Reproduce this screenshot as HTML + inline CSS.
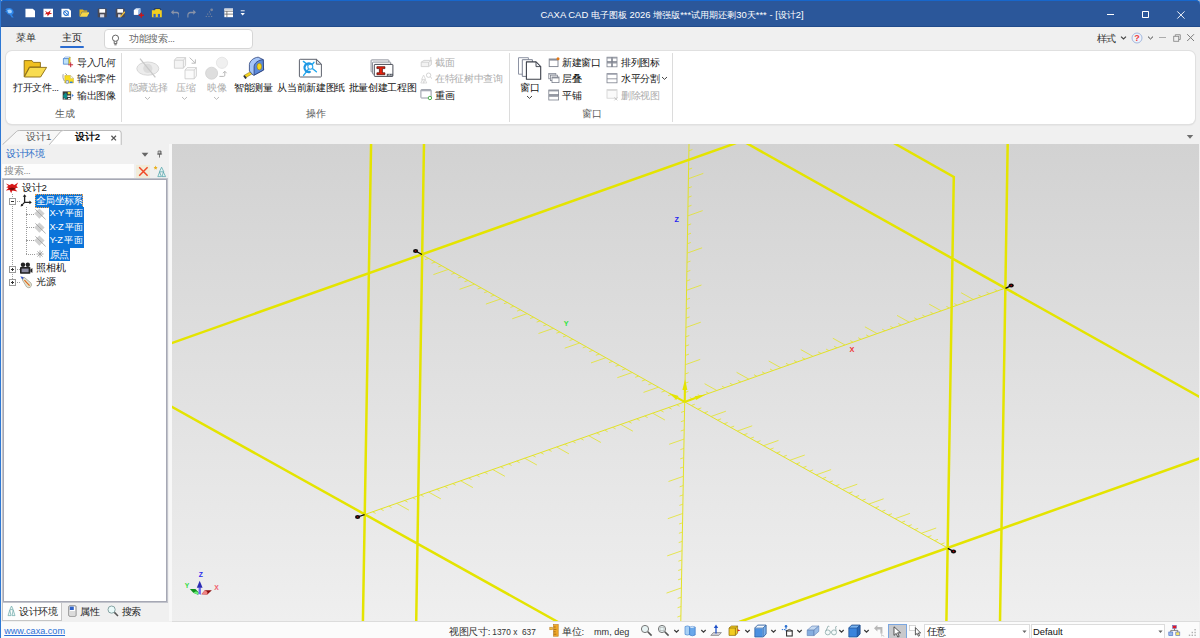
<!DOCTYPE html>
<html lang="zh"><head><meta charset="utf-8"><title>CAXA CAD</title>
<style>
*{box-sizing:border-box;margin:0;padding:0}
html,body{width:1200px;height:638px;overflow:hidden}
body{position:relative;background:#f0f0f0;font-family:"Liberation Sans",sans-serif;font-size:9.7px;color:#262626;line-height:1}
.abs,.t,svg.i{position:absolute}
.t{white-space:nowrap;line-height:12px;height:12px;letter-spacing:-.35px}
.l{letter-spacing:0}
.j{text-align-last:justify}
.c{text-align:center}
#title{left:0;top:0;width:1200px;height:26.7px;background:#2b579a;border-bottom:.8px solid #214b8c;box-shadow:inset 0 1px 0 #1767cc;border-radius:4.5px 4.5px 0 0}
#cor{left:0;top:0;width:1200px;height:6px;background:#9db6d2}
#lb{left:0;top:0;width:1px;height:638px;background:#2e78d4}
#tb{display:none}
#rb{left:1198.6px;top:27px;width:1.4px;height:594px;background:#f0f0f0}
#ribbon{left:6px;top:51px;width:1189px;height:73px;background:#fff;border-radius:6px;box-shadow:0 0 0 1px #e0e0e0,0 1px 2px rgba(0,0,0,.14)}
.sep{position:absolute;width:1px;background:#dcdcdc;top:53px;height:68.5px}
.dis{color:#adadad}
.g{color:#444}
#search{left:103.5px;top:29.2px;width:149.3px;height:19.4px;background:#fff;border:1px solid #d6d6d6;border-radius:4px}
#view{left:172px;top:144px;width:1027px;height:477px;background:linear-gradient(#d2d2d2,#efefef)}
#vb{left:172px;top:621px;width:1028px;height:1px;background:#dcdcdc}
#status{left:1px;top:622px;width:1198px;height:16px;background:#fbfbfb}
#pstrip{left:169px;top:144px;width:3px;height:477px;background:#f8f8f8}
#tree{left:2px;top:178px;width:166px;height:425.4px;background:#fff;border:1px solid #c2c4cc;box-shadow:inset 0 0 0 1px #a6a8b4}
.sel{position:absolute;background:#0a74da;color:#fff;height:13.5px;line-height:13px;white-space:nowrap;padding:0 1px;letter-spacing:-.35px;overflow:hidden;text-align-last:justify}
.dot{position:absolute;border-left:1px dotted #9c9c9c}
.doth{position:absolute;border-top:1px dotted #9c9c9c}
.pm{position:absolute;width:7px;height:7px;border:1px solid #9a9a9a;background:#fff}
.pm:before{content:"";position:absolute;left:1px;top:2px;width:3px;height:1px;background:#333}
.pm.p:after{content:"";position:absolute;left:2px;top:1px;width:1px;height:3px;background:#333}
.combo{position:absolute;top:624px;height:15px;background:#fff;border:1px solid #dcdcdc}
</style></head><body>
<div id="cor" class="abs"></div>
<div id="title" class="abs">
<div class="t j l" style="left:540.5px;width:263.2px;top:9px;color:#fff;font-size:9.45px">CAXA CAD 电子图板 2026 增强版***试用期还剩30天*** - [设计2]</div>
<!-- quick access icons -->
<svg class="i" style="left:3.6px;top:7.1px" width="11.7" height="11.7" viewBox="0 0 13 13"><path d="M1.5 2.5C4 .5 8 .8 9.8 3.2C11.6 5.4 10.6 8 8.6 8.6L10.8 11.6L8.6 11.8L6.6 8.6C4.6 8.6 3.2 7.4 2.8 5.8L1 5.4L2.8 4.2Z" fill="#2f86e8"/><path d="M3.6 3.4C5.4 2.2 7.8 2.6 8.6 4.2C9.2 5.6 8.4 6.8 7 7C5.6 7.2 4.4 6.4 4.2 5.2Z" fill="#9fd0ff"/></svg>
<svg class="i" style="left:24.6px;top:8.1px" width="10.8" height="9.9" viewBox="0 0 12 11"><path d="M.5 .8H8.6L11.4 3.2V10.2H.5Z" fill="#fff"/></svg>
<svg class="i" style="left:42.6px;top:8.1px" width="10.8" height="9.9" viewBox="0 0 12 11"><rect x=".5" y=".8" width="11" height="9.4" fill="#fff"/><path d="M2 3L5.4 5L8.6 2.6L7.6 5.4L10.4 6.4L7 7L5.2 9.2L4.6 6.8L1.8 7.2L3.8 5.4Z" fill="#d01818"/></svg>
<svg class="i" style="left:60.6px;top:8.1px" width="10.8" height="9.9" viewBox="0 0 12 11"><path d="M.5 .8H8.6L11.4 3.2V10.2H.5Z" fill="#fff"/><circle cx="5.6" cy="5.6" r="2.6" fill="none" stroke="#1f6fd0" stroke-width="1.2"/><path d="M3 3.2L8.6 8.4" stroke="#1f6fd0" stroke-width="1"/></svg>
<svg class="i" style="left:78.6px;top:8.1px" width="10.8" height="9.9" viewBox="0 0 12 11"><path d="M.6 1.6H4.4L5.4 2.8H9.2V4.2H3.2L.6 9.6Z" fill="#e8b81c"/><path d="M3.4 4.8H11.6L9 9.8H.8Z" fill="#f6d648"/></svg>
<svg class="i" style="left:96.6px;top:8.1px" width="10.8" height="9.9" viewBox="0 0 12 11"><rect x=".8" y=".6" width="10" height="9.8" rx="1" fill="#4a4a55"/><rect x="2.6" y="1.2" width="6.4" height="4" fill="#fff"/><rect x="3.4" y="7" width="4.6" height="3.4" fill="#d8d8e4"/></svg>
<svg class="i" style="left:114.6px;top:8.1px" width="10.8" height="9.9" viewBox="0 0 12 11"><rect x=".8" y=".6" width="10" height="9.8" rx="1" fill="#4a4a55"/><rect x="2.6" y="1.2" width="6.4" height="4" fill="#fff"/><rect x="3.4" y="7" width="3" height="3.4" fill="#d8d8e4"/><path d="M6 8.8L10.4 3.6L11.6 4.8L7.2 9.8L5.6 10.2Z" fill="#f2c23c"/></svg>
<svg class="i" style="left:132.7px;top:7.1px" width="11.7" height="11.7" viewBox="0 0 13 13"><path d="M1 3.4L3.4 1.4H8.2V6.4L5.8 8.6H1Z" fill="#dfe9f7"/><path d="M1 3.4H5.8V8.6H1Z" fill="#fff"/><path d="M5.8 3.4L8.2 1.4V6.4L5.8 8.6Z" fill="#8fb4e6"/><path d="M9.2 6.4V12M6.4 9.2H12" stroke="#d01414" stroke-width="1.5"/></svg>
<svg class="i" style="left:150.7px;top:8.1px" width="11.7" height="9.9" viewBox="0 0 13 11"><path d="M1 2.4H4.4L5.2 1H9.6L10.2 2.4H12V10.4H1Z" fill="#f2cf1f"/><rect x="2.8" y="6.6" width="2.4" height="3.8" fill="#2f62c8"/><rect x="7.6" y="6.6" width="2.4" height="3.8" fill="#2f62c8"/><path d="M3 2.2L4 .6H10.4L11 2.2" fill="none" stroke="#333" stroke-width=".7"/></svg>
<svg class="i" style="left:169.6px;top:9.0px" width="9.9" height="9.0" viewBox="0 0 11 10"><path d="M4 .8L1 3.6L4 6.4V4.6H7.2C8.6 4.6 9.4 5.6 9.4 6.8V9.4H10.6V6.6C10.6 4.6 9.2 3 7.2 3H4Z" fill="#8a94a8"/></svg>
<svg class="i" style="left:186.6px;top:9.0px" width="9.9" height="9.0" viewBox="0 0 11 10"><path d="M7 .8L10 3.6L7 6.4V4.6H3.8C2.4 4.6 1.6 5.6 1.6 6.8V9.4H.4V6.6C.4 4.6 1.8 3 3.8 3H7Z" fill="#8a94a8"/></svg>
<svg class="i" style="left:204.6px;top:8.1px" width="9.9" height="9.9" viewBox="0 0 11 11"><g fill="#7b879f"><circle cx="7.4" cy="2" r="1.5"/><rect x="4.4" y="3.8" width="1.2" height="1.2"/><rect x="2.4" y="6.2" width="1.2" height="1.2"/><rect x="5.4" y="6.2" width="1.2" height="1.2"/><rect x=".8" y="8.8" width="1.2" height="1.2"/><rect x="3.8" y="8.8" width="1.2" height="1.2"/><rect x="6.8" y="8.8" width="1.2" height="1.2"/></g></svg>
<svg class="i" style="left:223.6px;top:8.1px" width="9.9" height="9.9" viewBox="0 0 11 11"><rect x=".4" y=".6" width="10" height="9.6" fill="#fff"/><path d="M.4 3.6H10.4M.4 6.8H10.4M3.2 3.6V10.2" stroke="#555" stroke-width=".8"/><rect x=".4" y=".6" width="10" height="2" fill="#cfd4dc"/></svg>
<svg class="i" style="left:240.3px;top:9.9px" width="5.4" height="7.2" viewBox="0 0 6 8"><rect x=".8" y=".4" width="4.4" height="1" fill="#fff"/><path d="M.6 3.2H5.4L3 6Z" fill="#fff"/></svg>
<!-- window controls -->
<div class="abs" style="left:1107px;top:14px;width:7.2px;height:1px;background:#fff"></div>
<div class="abs" style="left:1142px;top:11px;width:7.4px;height:7.2px;border:1px solid #fff;border-radius:.8px"></div>
<svg class="i" style="left:1176px;top:9.5px" width="10" height="10" viewBox="0 0 10 10"><path d="M1.3 1.4L8.5 8.6M8.5 1.4L1.3 8.6" stroke="#f2f5fa" stroke-width="1"/></svg>
</div>
<!-- menu row -->
<div class="t j" style="left:16.0px;width:19.5px;top:32px;font-size:10.4px;color:#333">菜单</div>
<div class="t j" style="left:62.0px;width:19.5px;top:32px;font-size:10.4px;color:#111">主页</div>
<div class="abs" style="left:60px;top:46px;width:24px;height:2px;background:#2b6cd0;border-radius:1px"></div>
<div id="search" class="abs"></div>
<svg class="i" style="left:111.2px;top:33.6px" width="9" height="12" viewBox="0 0 9 12"><circle cx="4.5" cy="4.2" r="3.1" fill="none" stroke="#555" stroke-width=".9"/><path d="M3.2 7.2V9.6H5.8V7.2M3.4 10.8H5.6" fill="none" stroke="#555" stroke-width=".9"/></svg>
<div class="t j" style="left:129.0px;width:45.7px;top:33px;color:#6a6a6a;font-size:9.6px">功能搜索...</div>
<div class="t j" style="left:1096.6px;width:19.5px;top:32.6px;color:#333">样式</div>
<svg class="i" style="left:1120px;top:35px" width="7" height="6" viewBox="0 0 7 6"><path d="M1 1.6L3.5 4L6 1.6" fill="none" stroke="#444" stroke-width="1.2"/></svg>
<svg class="i" style="left:1131px;top:32px" width="12" height="12" viewBox="0 0 12 12"><circle cx="6" cy="6" r="5" fill="#edf2fa" stroke="#9cb2da" stroke-width=".9"/><text x="6" y="9.2" font-family="Liberation Sans, sans-serif" font-weight="bold" font-size="9" fill="#f03a3a" text-anchor="middle">?</text></svg>
<svg class="i" style="left:1147px;top:35px" width="7" height="6" viewBox="0 0 7 6"><path d="M1 1.6L3.5 4L6 1.6" fill="none" stroke="#444" stroke-width="1"/></svg>
<div class="abs" style="left:1159px;top:37.4px;width:6.6px;height:1px;background:#ababab"></div>
<svg class="i" style="left:1172.6px;top:33.8px" width="8" height="8" viewBox="0 0 9 9"><path d="M2.6 2.4V.8H8.2V6.2H6.6" fill="none" stroke="#8a8a8a" stroke-width="1"/><rect x=".8" y="2.6" width="5.6" height="5.6" fill="none" stroke="#8a8a8a" stroke-width="1"/></svg>
<svg class="i" style="left:1186px;top:33px" width="9" height="9" viewBox="0 0 9 9"><path d="M1.2 1.2L8 8M8 1.2L1.2 8" stroke="#7c7c7c" stroke-width="1"/></svg>
<div id="ribbon" class="abs"></div>
<div class="sep" style="left:121.4px"></div><div class="sep" style="left:508.9px"></div><div class="sep" style="left:672.2px"></div>
<!-- group 1 -->
<svg class="i" style="left:23px;top:59px" width="25" height="20" viewBox="0 0 25 20"><path d="M1.2 1.6H9L10.4 3.4H17.4V8H6.4L1.2 17.6Z" fill="#f0c020" stroke="#8a6a10" stroke-width=".9" stroke-linejoin="round"/><path d="M6.6 8.4H23.6L17.6 18H1.4Z" fill="#f8dc50" stroke="#8a6a10" stroke-width=".9" stroke-linejoin="round"/></svg>
<div class="t j" style="left:12.9px;width:45.8px;top:81.5px">打开文件...</div>
<svg class="i" style="left:62px;top:56px" width="13" height="12" viewBox="0 0 13 12"><path d="M1.4 2.6L3 1H8.2L6.8 2.6Z" fill="#eef6fc" stroke="#4a84d4" stroke-width=".5"/><path d="M1.4 2.6H6.8V8.2H1.4Z" fill="#bfe2f8" stroke="#3a78d0" stroke-width=".7"/><path d="M6.8 2.6L8.2 1V6.6L6.8 8.2Z" fill="#f0d020" stroke="#b89a10" stroke-width=".4"/><path d="M8.7 6.4V11.2M6.3 8.8H11.1" stroke="#c42434" stroke-width="1"/></svg>
<svg class="i" style="left:62px;top:72px" width="13" height="12" viewBox="0 0 13 12"><path d="M2.8 3.6H8.6L11.4 6.2V11H2.8Z" fill="#f8dc20" stroke="#c8a818" stroke-width=".5"/><path d="M8.6 3.6V6.2H11.4Z" fill="#fff" stroke="#b0b0b0" stroke-width=".4"/><path d="M1.2 2.2C.6 4.6 1 7 2.4 9M3.4 1.4L5 3" fill="none" stroke="#8a8a8a" stroke-width=".8"/><rect x="4" y="8.6" width="2.6" height="2.6" rx=".6" fill="#e8f0fa" stroke="#4a6ab0" stroke-width=".6"/><path d="M8 9.6H10.6V11H8Z" fill="#2a7ae0"/></svg>
<svg class="i" style="left:62px;top:89px" width="13" height="12" viewBox="0 0 13 12"><rect x=".7" y="2.4" width="8.4" height="8.2" fill="#3a3a3a"/><path d="M1.2 6.6L3.6 3.4L5 5.2V9.6L3.4 10L1.2 8Z" fill="#0c8c88"/><rect x="5.8" y="3" width="2.6" height="2.2" fill="#e8d830"/><path d="M5.4 6.4H8.4V8H5.4ZM1.6 9.4H3V10.2H1.6ZM6 9H8.4V10.2H6Z" fill="#f4f4f4"/><path d="M9.8 4.8L11.8 6.4L9.8 8Z" fill="#3a82e8"/></svg>
<div class="t j" style="left:77.0px;width:38.8px;top:56.5px">导入几何</div>
<div class="t j" style="left:77.0px;width:38.8px;top:72.5px">输出零件</div>
<div class="t j" style="left:77.0px;width:38.8px;top:89.5px">输出图像</div>
<div class="t j g" style="left:55.3px;width:19.5px;top:107.5px;color:#5c5c5c">生成</div>
<!-- group 2 -->
<svg class="i" style="left:135px;top:57px" width="26" height="22" viewBox="0 0 26 22"><ellipse cx="12.8" cy="11.6" rx="11" ry="6.6" fill="#ececec" stroke="#d4d4d4" stroke-width=".9"/><circle cx="12.8" cy="11.4" r="4.6" fill="#dcdcdc"/><path d="M5 1.6L20.4 20.4" stroke="#c8c8c8" stroke-width="1.3"/></svg>
<div class="t j dis" style="left:128.7px;width:38.8px;top:81.5px">隐藏选择</div>
<svg class="i" style="left:144px;top:96px" width="7" height="5" viewBox="0 0 7 5"><path d="M1 1L3.5 3.4L6 1" fill="none" stroke="#b4b4b4" stroke-width=".9"/></svg>
<svg class="i" style="left:173px;top:56px" width="25" height="24" viewBox="0 0 25 24"><g fill="#f4f4f4" stroke="#cfcfcf" stroke-width=".9" stroke-linejoin="round"><path d="M1.4 4.2L3.6 1.6H12.6V9.4L10.4 12.2H1.4Z"/><path d="M1.4 4.2H10.4V12.2M10.4 4.2L12.6 1.6" fill="none"/><path d="M12 14L14.2 11.6H23.4V20L21.2 22.8H12Z" fill="#fbfbfb"/><path d="M12 14H21.2V22.8M21.2 14L23.4 11.6" fill="none"/></g><path d="M16.6 1.6L22.2 7M22.4 3.4V7.2H18.6" fill="none" stroke="#bcbcbc" stroke-width="1"/></svg>
<div class="t j dis" style="left:175.7px;width:19.5px;top:81.5px">压缩</div>
<svg class="i" style="left:181px;top:96px" width="7" height="5" viewBox="0 0 7 5"><path d="M1 1L3.5 3.4L6 1" fill="none" stroke="#b4b4b4" stroke-width=".9"/></svg>
<svg class="i" style="left:204px;top:56px" width="25" height="24" viewBox="0 0 25 24"><circle cx="18" cy="6.8" r="5.6" fill="#f0f0f0" stroke="#e2e2e2" stroke-width=".8"/><circle cx="7.6" cy="17.2" r="6" fill="#dedede" stroke="#d0d0d0" stroke-width=".8"/><path d="M15.4 20.4H19.6Q20.8 20.4 20.8 19.2V15.6M19 17.2L20.8 15.2L22.6 17.2" fill="none" stroke="#b8b8b8" stroke-width="1"/></svg>
<div class="t j dis" style="left:207.3px;width:19.5px;top:81.5px">映像</div>
<svg class="i" style="left:212.5px;top:96px" width="7" height="5" viewBox="0 0 7 5"><path d="M1 1L3.5 3.4L6 1" fill="none" stroke="#b4b4b4" stroke-width=".9"/></svg>
<svg class="i" style="left:236px;top:52px" width="36" height="30" viewBox="0 0 36 30"><path d="M8 23.4L15 19.4L16.6 21.6L9.6 25.8Z" fill="#f6d41c" stroke="#7a6410" stroke-width=".5"/><path d="M7.2 24L9.2 26.9L10.8 26L8.8 23.2Z" fill="#2a3040"/><path d="M13.4 12.4C13.6 9 18 5.4 22.2 5.2L27.2 7.6L27.6 18L18 23.2L17.2 23.2L13.4 19Z" fill="#a6c6f8" stroke="#2a3f78" stroke-width=".8" stroke-linejoin="round"/><path d="M18.1 14.4C18.4 10.8 22.6 8 27.2 7.6L27.6 18L18.1 23.1Z" fill="#5c8ada" stroke="#2a3f78" stroke-width=".8" stroke-linejoin="round"/><ellipse cx="23.3" cy="14.6" rx="2.3" ry="3.3" fill="#f8d81c" stroke="#8a7010" stroke-width=".5"/></svg>
<div class="t j" style="left:234.0px;width:38.8px;top:81.5px;color:#111">智能测量</div>
<svg class="i" style="left:294px;top:54px" width="36" height="30" viewBox="0 0 36 30"><path d="M6.2 5.3H22.4L27.4 10.2V22.2Q27.4 23 26.6 23H6.2Q5.4 23 5.4 22.2V6.1Q5.4 5.3 6.2 5.3Z" fill="#fff" stroke="#555a66" stroke-width=".95" stroke-linejoin="round"/><path d="M22.4 5.3V10.2H27.4Z" fill="#e4e6ea" stroke="#555a66" stroke-width=".9" stroke-linejoin="round"/><path d="M9.4 7.4L22.4 17.8M9.6 21.4L20 8.2" stroke="#22a8ee" stroke-width="1.4" stroke-linecap="round"/><path d="M17.2 10.2A4.3 4.3 0 1 0 15.8 17.9" fill="none" stroke="#1e96e2" stroke-width="2.2" stroke-linecap="round"/><circle cx="16.3" cy="12.8" r="2.5" fill="#fff" stroke="#2aa4ec" stroke-width="1.1"/></svg>
<div class="t j" style="left:277.2px;width:67.8px;top:81.5px;color:#111">从当前新建图纸</div>
<svg class="i" style="left:370px;top:58px" width="25" height="21" viewBox="0 0 25 21"><rect x="1.1" y="1.9" width="17.8" height="12" rx=".6" fill="#fff" stroke="#80848e" stroke-width=".9"/><rect x="2.5" y="4.1" width="18.2" height="12" rx=".6" fill="#fff" stroke="#80848e" stroke-width=".9"/><rect x="4.3" y="6.4" width="18.6" height="12" rx=".6" fill="#fff" stroke="#4a4e58" stroke-width="1"/><path d="M6.9 8.7H14.9V10.6H12.4V14.8H14.9V16.7H6.9V14.8H9.4V10.6H6.9Z" fill="#e8200c" stroke="#4a0a04" stroke-width=".7" stroke-linejoin="round"/><path d="M16.8 18.4V15.8H22.9V18.4Z" fill="#555a64"/><path d="M17.6 17.6L19.2 16.2L20.4 17.2L21.4 16.4L22.4 17.6Z" fill="#e8e8e8"/></svg>
<div class="t j" style="left:348.5px;width:67.8px;top:81.5px;color:#111">批量创建工程图</div>
<svg class="i" style="left:420px;top:56px" width="13" height="12" viewBox="0 0 13 12"><path d="M1.2 6.2L4 4.4H11.4V8.6L8.6 10.6H1.2ZM8.6 6.2V10.6M1.2 6.2H8.6L11.4 4.4M10.8 1V4.4" fill="#f2f2f2" stroke="#cfcfcf" stroke-width=".9" stroke-linejoin="round"/></svg>
<div class="t j dis" style="left:435.0px;width:19.5px;top:56.5px">截面</div>
<svg class="i" style="left:420px;top:72px" width="13" height="12" viewBox="0 0 13 12"><circle cx="8.6" cy="3.2" r="2.2" fill="none" stroke="#cfcfcf" stroke-width=".9"/><path d="M10.2 4.8L12 6.6" stroke="#cfcfcf" stroke-width="1"/><path d="M3.6 3L1.6 7.4H5.6ZM2.4 7.4L.8 11H4ZM5 7.4L3.6 11H6.8Z" fill="none" stroke="#d4d4d4" stroke-width=".8"/></svg>
<div class="t j dis" style="left:435.0px;width:67.8px;top:72.5px">在特征树中查询</div>
<svg class="i" style="left:420px;top:88px" width="13" height="13" viewBox="0 0 13 13"><rect x=".9" y="1.6" width="10.2" height="8.4" rx=".6" fill="#fff" stroke="#8a8e9a" stroke-width=".9"/><rect x=".9" y="1.6" width="10.2" height="1.7" fill="#a8acb6"/><circle cx="9.9" cy="10" r="1.7" fill="#fff" stroke="#4ab04a" stroke-width="1"/></svg>
<div class="t j" style="left:435.0px;width:19.5px;top:89.5px;color:#111">重画</div>
<div class="t j g" style="left:306.1px;width:19.5px;top:107.5px;color:#5c5c5c">操作</div>
<!-- group 3 -->
<svg class="i" style="left:517px;top:56px" width="26" height="25" viewBox="0 0 26 25"><g fill="#fff" stroke-linejoin="round"><path d="M1.5 1.7H11.4V18.2H1.5Z" stroke="#8e94a4" stroke-width="1"/><path d="M5.3 3.7H15.4V20.4H5.3Z" stroke="#7a8090" stroke-width="1"/><path d="M9.4 5.9H19L23.7 10.6V23.2H9.4Z" stroke="#3c404a" stroke-width="1.1"/><path d="M19 5.9V10.6H23.7Z" fill="#eceef2" stroke="#3c404a" stroke-width=".9"/></g></svg>
<div class="t j" style="left:520.0px;width:19.5px;top:81.5px;color:#111">窗口</div>
<svg class="i" style="left:525.5px;top:95px" width="7" height="5" viewBox="0 0 7 5"><path d="M1 1L3.5 3.4L6 1" fill="none" stroke="#444" stroke-width="1"/></svg>
<svg class="i" style="left:548px;top:57px" width="12" height="11" viewBox="0 0 12 11"><rect x="1.2" y="2" width="8.8" height="7.6" fill="#fff" stroke="#7d828e" stroke-width=".9"/><rect x="1.2" y="2" width="8.8" height="1.6" fill="#8a8e98"/><circle cx="10" cy="1.8" r="1.5" fill="#e07818"/></svg>
<svg class="i" style="left:548px;top:72px" width="12" height="12" viewBox="0 0 12 12"><g fill="#fff" stroke="#7d828e" stroke-width=".8"><rect x=".8" y="1.4" width="7" height="5.4"/><rect x="2.4" y="3.2" width="7" height="5.4"/><rect x="4" y="5" width="7" height="5.6"/></g><rect x="4" y="5" width="7" height="1.4" fill="#8a8e98"/><rect x=".8" y="1.4" width="7" height="1.2" fill="#a0a4ae"/></svg>
<svg class="i" style="left:548px;top:89px" width="12" height="12" viewBox="0 0 12 12"><g fill="#fff" stroke="#7d828e" stroke-width=".8"><rect x=".8" y="1" width="9.8" height="4.6"/><rect x=".8" y="6.4" width="9.8" height="4.6"/></g><rect x=".8" y="1" width="9.8" height="1.4" fill="#9498a2"/><rect x=".8" y="6.4" width="9.8" height="1.4" fill="#9498a2"/></svg>
<div class="t j" style="left:562.0px;width:38.8px;top:56.5px;color:#111">新建窗口</div>
<div class="t j" style="left:562.0px;width:19.5px;top:72.5px;color:#111">层叠</div>
<div class="t j" style="left:562.0px;width:19.5px;top:89.5px;color:#111">平铺</div>
<svg class="i" style="left:606px;top:56px" width="12" height="12" viewBox="0 0 12 12"><g fill="#fff" stroke="#7d828e" stroke-width=".8"><rect x="1" y="1.2" width="4.6" height="4.4"/><rect x="6.4" y="1.2" width="4.6" height="4.4"/><rect x="1" y="6.4" width="4.6" height="4.4"/><rect x="6.4" y="6.4" width="4.6" height="4.4"/></g><path d="M1 1.8H5.6M6.4 1.8H11M1 7H5.6M6.4 7H11" stroke="#9498a2" stroke-width="1.2"/></svg>
<svg class="i" style="left:606px;top:72px" width="12" height="12" viewBox="0 0 12 12"><rect x="1" y="1.6" width="10" height="9.2" fill="#fff" stroke="#7d828e" stroke-width=".8"/><path d="M1 6.8H11" stroke="#7d828e" stroke-width=".8"/><rect x="1" y="1.6" width="10" height="1.2" fill="#a0a4ae"/></svg>
<svg class="i" style="left:606px;top:88px" width="13" height="13" viewBox="0 0 13 13"><rect x="1" y="1.6" width="10" height="8.6" fill="#fafafa" stroke="#d0d0d0" stroke-width=".8"/><rect x="1" y="1.6" width="10" height="1.4" fill="#dcdcdc"/><path d="M8.4 9.4L11.4 12.4M11.4 9.4L8.4 12.4" stroke="#c4c4c4" stroke-width=".9"/></svg>
<div class="t j" style="left:621.0px;width:38.8px;top:56.5px;color:#111">排列图标</div>
<div class="t j" style="left:621.0px;width:38.8px;top:72.5px;color:#111">水平分割</div>
<svg class="i" style="left:661px;top:76px" width="7" height="5" viewBox="0 0 7 5"><path d="M1 1L3.5 3.4L6 1" fill="none" stroke="#444" stroke-width="1"/></svg>
<div class="t j dis" style="left:621.0px;width:38.8px;top:89.5px">删除视图</div>
<div class="t j g" style="left:581.7px;width:19.5px;top:107.5px;color:#5c5c5c">窗口</div>
<div id="view" class="abs"></div>
<svg id="vsvg" class="abs" style="left:172px;top:144px" width="1027" height="477" viewBox="172 144 1027 477">
<path d="M689.0 144L684.7 401.9L680.8 621M684.7 401.9L1005.4 288.1M684.7 401.9L422.0 254.7M684.7 401.9L364.7 514.6M684.7 401.9L947.6 547.9" stroke="#e2e21e" stroke-width="0.95" fill="none"/>
<path d="M692.7 399.1l-2.9 -1.6M700.7 396.2l-2.9 -1.6M708.8 393.4l-2.9 -1.6M716.8 390.5l-12.2 -6.8M724.8 387.7l-2.9 -1.6M732.8 384.8l-2.9 -1.6M740.8 382.0l-2.9 -1.6M748.8 379.1l-12.2 -6.8M756.9 376.3l-2.9 -1.6M764.9 373.4l-2.9 -1.6M772.9 370.6l-2.9 -1.6M780.9 367.8l-12.2 -6.8M788.9 364.9l-2.9 -1.6M796.9 362.1l-2.9 -1.6M805.0 359.2l-2.9 -1.6M813.0 356.4l-12.2 -6.8M821.0 353.5l-2.9 -1.6M829.0 350.7l-2.9 -1.6M837.0 347.8l-2.9 -1.6M845.0 345.0l-12.2 -6.8M853.1 342.2l-2.9 -1.6M861.1 339.3l-2.9 -1.6M869.1 336.5l-2.9 -1.6M877.1 333.6l-12.2 -6.8M885.1 330.8l-2.9 -1.6M893.2 327.9l-2.9 -1.6M901.2 325.1l-2.9 -1.6M909.2 322.2l-12.2 -6.8M917.2 319.4l-2.9 -1.6M925.2 316.6l-2.9 -1.6M933.2 313.7l-2.9 -1.6M941.3 310.9l-12.2 -6.8M949.3 308.0l-2.9 -1.6M957.3 305.2l-2.9 -1.6M965.3 302.3l-2.9 -1.6M973.3 299.5l-12.2 -6.8M981.3 296.6l-2.9 -1.6M989.4 293.8l-2.9 -1.6M997.4 290.9l-2.9 -1.6M678.1 398.2l-3.5 1.2M671.6 394.5l-3.5 1.2M665.0 390.9l-3.5 1.2M658.4 387.2l-14.9 5.2M651.9 383.5l-3.5 1.2M645.3 379.8l-3.5 1.2M638.7 376.1l-3.5 1.2M632.2 372.5l-14.9 5.2M625.6 368.8l-3.5 1.2M619.0 365.1l-3.5 1.2M612.5 361.4l-3.5 1.2M605.9 357.7l-14.9 5.2M599.3 354.1l-3.5 1.2M592.8 350.4l-3.5 1.2M586.2 346.7l-3.5 1.2M579.6 343.0l-14.9 5.2M573.1 339.3l-3.5 1.2M566.5 335.7l-3.5 1.2M559.9 332.0l-3.5 1.2M553.4 328.3l-14.9 5.2M546.8 324.6l-3.5 1.2M540.2 320.9l-3.5 1.2M533.6 317.3l-3.5 1.2M527.1 313.6l-14.9 5.2M520.5 309.9l-3.5 1.2M513.9 306.2l-3.5 1.2M507.4 302.5l-3.5 1.2M500.8 298.9l-14.9 5.2M494.2 295.2l-3.5 1.2M487.7 291.5l-3.5 1.2M481.1 287.8l-3.5 1.2M474.5 284.1l-14.9 5.2M468.0 280.5l-3.5 1.2M461.4 276.8l-3.5 1.2M454.8 273.1l-3.5 1.2M448.3 269.4l-14.9 5.2M441.7 265.7l-3.5 1.2M435.1 262.1l-3.5 1.2M428.6 258.4l-3.5 1.2M676.7 404.7l2.9 1.6M668.7 407.5l2.9 1.6M660.7 410.4l2.9 1.6M652.7 413.2l12.2 6.8M644.7 416.0l2.9 1.6M636.7 418.8l2.9 1.6M628.7 421.6l2.9 1.6M620.7 424.4l12.2 6.8M612.7 427.3l2.9 1.6M604.7 430.1l2.9 1.6M596.7 432.9l2.9 1.6M588.7 435.7l12.2 6.8M580.7 438.5l2.9 1.6M572.7 441.3l2.9 1.6M564.7 444.2l2.9 1.6M556.7 447.0l12.2 6.8M548.7 449.8l2.9 1.6M540.7 452.6l2.9 1.6M532.7 455.4l2.9 1.6M524.7 458.2l12.2 6.8M516.7 461.1l2.9 1.6M508.7 463.9l2.9 1.6M500.7 466.7l2.9 1.6M492.7 469.5l12.2 6.8M484.7 472.3l2.9 1.6M476.7 475.2l2.9 1.6M468.7 478.0l2.9 1.6M460.7 480.8l12.2 6.8M452.7 483.6l2.9 1.6M444.7 486.4l2.9 1.6M436.7 489.2l2.9 1.6M428.7 492.1l12.2 6.8M420.7 494.9l2.9 1.6M412.7 497.7l2.9 1.6M404.7 500.5l2.9 1.6M396.7 503.3l12.2 6.8M388.7 506.1l2.9 1.6M380.7 509.0l2.9 1.6M372.7 511.8l2.9 1.6M691.3 405.5l3.5 -1.3M697.8 409.2l3.5 -1.3M704.4 412.8l3.5 -1.3M711.0 416.5l14.9 -5.3M717.6 420.1l3.5 -1.3M724.1 423.8l3.5 -1.3M730.7 427.4l3.5 -1.3M737.3 431.1l14.9 -5.3M743.9 434.8l3.5 -1.3M750.4 438.4l3.5 -1.3M757.0 442.0l3.5 -1.3M763.6 445.7l14.9 -5.3M770.1 449.3l3.5 -1.3M776.7 453.0l3.5 -1.3M783.3 456.6l3.5 -1.3M789.9 460.3l14.9 -5.3M796.4 463.9l3.5 -1.3M803.0 467.6l3.5 -1.3M809.6 471.2l3.5 -1.3M816.2 474.9l14.9 -5.3M822.7 478.5l3.5 -1.3M829.3 482.2l3.5 -1.3M835.9 485.8l3.5 -1.3M842.4 489.5l14.9 -5.3M849.0 493.1l3.5 -1.3M855.6 496.8l3.5 -1.3M862.2 500.4l3.5 -1.3M868.7 504.1l14.9 -5.3M875.3 507.8l3.5 -1.3M881.9 511.4l3.5 -1.3M888.4 515.0l3.5 -1.3M895.0 518.7l14.9 -5.3M901.6 522.4l3.5 -1.3M908.2 526.0l3.5 -1.3M914.7 529.6l3.5 -1.3M921.3 533.3l14.9 -5.3M927.9 536.9l3.5 -1.3M934.5 540.6l3.5 -1.3M941.0 544.2l3.5 -1.3M684.9 392.6l3.5 -1.3M685.0 383.3l3.5 -1.3M685.2 374.0l3.5 -1.3M685.3 364.7l14.9 -5.3M685.5 355.4l3.5 -1.3M685.6 346.1l3.5 -1.3M685.8 336.8l3.5 -1.3M685.9 327.5l14.9 -5.3M686.1 318.2l3.5 -1.3M686.2 308.9l3.5 -1.3M686.4 299.6l3.5 -1.3M686.6 290.3l14.9 -5.3M686.7 281.0l3.5 -1.3M686.9 271.7l3.5 -1.3M687.0 262.4l3.5 -1.3M687.2 253.1l14.9 -5.3M687.3 243.8l3.5 -1.3M687.5 234.5l3.5 -1.3M687.6 225.2l3.5 -1.3M687.8 215.9l14.9 -5.3M688.0 206.6l3.5 -1.3M688.1 197.3l3.5 -1.3M688.3 188.0l3.5 -1.3M688.4 178.7l14.9 -5.3M688.6 169.4l3.5 -1.3M688.7 160.1l3.5 -1.3M688.9 150.8l3.5 -1.3M689.0 141.5l14.9 -5.3M684.5 411.2l-3.5 1.2M684.4 420.5l-3.5 1.2M684.2 429.8l-3.5 1.2M684.0 439.1l-14.9 5.2M683.9 448.4l-3.5 1.2M683.7 457.7l-3.5 1.2M683.5 467.0l-3.5 1.2M683.4 476.3l-14.9 5.2M683.2 485.6l-3.5 1.2M683.1 494.9l-3.5 1.2M682.9 504.2l-3.5 1.2M682.7 513.5l-14.9 5.2M682.6 522.8l-3.5 1.2M682.4 532.1l-3.5 1.2M682.2 541.4l-3.5 1.2M682.1 550.7l-14.9 5.2M681.9 560.0l-3.5 1.2M681.7 569.3l-3.5 1.2M681.6 578.6l-3.5 1.2M681.4 587.9l-14.9 5.2M681.2 597.2l-3.5 1.2M681.1 606.5l-3.5 1.2M680.9 615.8l-3.5 1.2" stroke="#e3e32a" stroke-width="0.8" fill="none"/>
<path d="M170 343.7L736 143.1M746.2 143L1200 397.2M893.7 143L953.8 176.9L946.4 622M371.1 143L362.9 622M424.0 143L416.2 622M1007.7 143L1000 622M170 405.8L558 622M739.2 622L1200 458.2" stroke="#e4e400" stroke-width="2.5" fill="none" stroke-linejoin="miter"/>
<path d="M684.7 401.9L684.9 390.1" stroke="#e4e400" stroke-width="2.1"/><path d="M685.1 379.3L687.4 390.1L682.4 390.1Z" fill="#e4e400"/>
<path d="M684.7 401.9L695.3 398.1" stroke="#e4e400" stroke-width="2.1"/><path d="M706.2 394.3L696.0 399.9L694.7 396.3Z" fill="#e4e400"/>
<path d="M684.7 401.9L677.5 397.8" stroke="#e4e400" stroke-width="2.1"/><path d="M668.3 392.7L678.5 395.9L676.4 399.8Z" fill="#e4e400"/>
<path d="M422 254.5L415.6 251" stroke="#0a0a0a" stroke-width="1.3"/><ellipse cx="415.6" cy="251" rx="2.6" ry="2" fill="#0a0a0a"/><circle cx="415.6" cy="251" r="0.8" fill="#b00000"/>
<path d="M364.6 514.7L357.6 517" stroke="#0a0a0a" stroke-width="1.3"/><ellipse cx="357.6" cy="517" rx="2.6" ry="2" fill="#0a0a0a"/><circle cx="357.6" cy="517" r="0.8" fill="#b00000"/>
<path d="M1005.5 288.3L1011.2 285.6" stroke="#0a0a0a" stroke-width="1.3"/><ellipse cx="1011.2" cy="285.6" rx="2.6" ry="2" fill="#0a0a0a"/><circle cx="1011.2" cy="285.6" r="0.8" fill="#b00000"/>
<path d="M947.8 548.4L953.5 551.4" stroke="#0a0a0a" stroke-width="1.3"/><ellipse cx="953.5" cy="551.4" rx="2.6" ry="2" fill="#0a0a0a"/><circle cx="953.5" cy="551.4" r="0.8" fill="#b00000"/>
<g font-family="Liberation Sans, sans-serif" font-size="7.3" font-weight="bold" text-anchor="middle"><text x="676.8" y="222.3" fill="#2424f0">Z</text><text x="566.1" y="326.1" fill="#30e440">Y</text><text x="852" y="351.9" fill="#f03434">X</text></g>
<g font-family="Liberation Sans, sans-serif" font-size="6.8" font-weight="bold" text-anchor="middle"><text x="200.9" y="576.9" fill="#2a2aee">Z</text><text x="187.1" y="587.9" fill="#34dc44">Y</text><text x="216.4" y="590" fill="#f0606c">X</text></g><path d="M189.9 589.1H195.4L198.8 592.6L198 594.8L193.3 592.8Z" fill="#12901e"/><path d="M193.3 592.8L196 591.2L198.8 592.8L198 594.8Z" fill="#6af07a"/><path d="M204.9 590.2H211.9L207.3 594.6L201.5 594.2Z" fill="#8e0c0c"/><path d="M204.9 590.2L207.4 592L207.3 594.6L201.5 594.2Z" fill="#f08484"/><path d="M198.6 587.4H200.9V594.8H198.6Z" fill="#6a6af2"/><path d="M199.7 580.8L202.6 587.8H196.8Z" fill="#2c2cb4"/><circle cx="199.7" cy="595.2" r="0.9" fill="#fff"/>
</svg><!-- doc tabs -->
<svg class="i" style="left:0;top:128px" width="200" height="17" viewBox="0 128 200 17"><path d="M2.6 144.6L16.4 131.6Q17.4 130.5 19.2 130.5H62V144.6Z" fill="#f7f7f7"/><path d="M2.6 144.6L16.4 131.6Q17.4 130.5 19.2 130.5H62" fill="none" stroke="#b2b2b2" stroke-width=".9"/><path d="M49.2 144.8L60.6 131.6Q61.6 130.5 63.4 130.5H118.6Q121.2 130.5 121.2 133V144.8Z" fill="#fff" stroke="#b2b2b2" stroke-width=".9"/><path d="M49.8 145H120.8" stroke="#fff" stroke-width="1.4"/><path d="M111.4 135.8L116 140.4M116 135.8L111.4 140.4" stroke="#555" stroke-width="1.25"/></svg>
<div class="t j" style="left:26.4px;width:24.5px;top:131.3px;color:#555;font-size:9.6px">设计1</div>
<div class="t j" style="left:75.2px;width:24.5px;top:131.3px;color:#111;font-weight:bold;font-size:9.6px">设计2</div>
<svg class="i" style="left:1186px;top:134px" width="8" height="6" viewBox="0 0 8 6"><path d="M.8 1H7.2L4 4.8Z" fill="#6e6e6e"/></svg>
<!-- left panel -->
<div id="pstrip" class="abs"></div>
<div class="t j" style="left:6.0px;width:38.8px;top:147.6px;color:#2a6dc8;font-size:9.8px">设计环境</div>
<svg class="i" style="left:141px;top:152.3px" width="8" height="6" viewBox="0 0 8 6"><path d="M.6 .8H7.4L4 4.8Z" fill="#666"/></svg>
<svg class="i" style="left:155.5px;top:149.6px" width="7" height="8.6" viewBox="0 0 8 10"><path d="M2.4 1.2H5.8V4.6H2.4ZM4.8 1.2V4.6M1.2 4.8H7M4 4.8V8.8" fill="none" stroke="#555" stroke-width=".9"/></svg>
<div class="abs" style="left:2px;top:164px;width:132px;height:14px;background:#fdfdfd"></div>
<div class="t j" style="left:4.0px;width:26.4px;top:165px;color:#8a8a8a;font-size:9.6px">搜索...</div>
<div class="abs" style="left:136px;top:165px;width:14px;height:13px;background:#f1ecd9"></div>
<svg class="i" style="left:138px;top:166px" width="11" height="11" viewBox="0 0 11 11"><path d="M1.2 1.2L9.6 9.8M9.6 1.2L1.2 9.8" stroke="#f04a28" stroke-width="1.5"/></svg>
<svg class="i" style="left:153px;top:165px" width="14" height="13" viewBox="0 0 14 13"><path d="M2.6 .6L3.2 2L4.6 2.2L3.6 3.2L3.8 4.6L2.6 4L1.4 4.6L1.6 3.2L.6 2.2L2 2Z" fill="#e8b020"/><path d="M8.6 2.2L6.4 6.8H10.8ZM6.6 7L4.8 11.6H8.4ZM10.4 7L9 11.6H12.6Z" fill="#e4f2f2" stroke="#4aa0a8" stroke-width=".7"/></svg>
<div id="tree" class="abs"></div>
<!-- tree lines -->
<div class="dot" style="left:12px;top:194px;height:85px"></div>
<div class="dot" style="left:26px;top:207px;height:47px"></div>
<div class="doth" style="left:15px;top:201px;width:5px"></div>
<div class="doth" style="left:26px;top:214px;width:8px"></div><div class="doth" style="left:26px;top:227px;width:8px"></div><div class="doth" style="left:26px;top:240px;width:8px"></div><div class="doth" style="left:26px;top:254px;width:9px"></div>
<div class="doth" style="left:15px;top:268.6px;width:5px"></div><div class="doth" style="left:15px;top:282px;width:5px"></div>
<div class="pm" style="left:9px;top:198px"></div><div class="pm p" style="left:9px;top:265.6px"></div><div class="pm p" style="left:9px;top:279px"></div>
<!-- row1 -->
<svg class="i" style="left:5px;top:181px" width="14" height="13" viewBox="0 0 14 13"><path d="M.8 2.4L4.6 4L7 2.8L9.4 4L13.2 1.6L11.4 5L13 6.4L9.6 7.4L12.4 10.6L7.2 9.4L6.2 12.2L4.6 9L.8 9.6L3.6 7L1.2 6.2L3.4 5Z" fill="#d81818"/><path d="M3 7.6L7 9.6L11 7.4L7.2 6.4Z" fill="#7a0a0a"/></svg>
<div class="t j" style="left:22.0px;width:24.5px;top:181.5px;color:#111">设计2</div>
<!-- row2 -->
<svg class="i" style="left:20px;top:194px" width="12" height="13" viewBox="0 0 12 13"><path d="M4.6 1.6V8.4H10.6M4.6 8.4L1.6 11.4" fill="none" stroke="#222" stroke-width="1.3"/><path d="M4.6 .2L6.4 2.8H2.8ZM11.8 8.4L9.4 6.6V10.2ZM.6 12.4L1.2 9.8L3.4 11.8Z" fill="#222"/></svg>
<div class="sel" style="left:35px;top:194px;width:47.5px;letter-spacing:-.75px;outline:1px dotted #e8a050;outline-offset:-1px">全局坐标系</div>
<!-- rows 3-6 -->
<svg class="i" style="left:33px;top:207px" width="14" height="13" viewBox="0 0 14 13"><path d="M6.4 1.4L11.6 6.6L6.4 11.8L1.2 6.6Z" fill="#d0d0d0"/><path d="M2.4 2.4L12.6 12.4" stroke="#9a9a9a" stroke-width=".8"/></svg>
<svg class="i" style="left:33px;top:220.5px" width="14" height="13" viewBox="0 0 14 13"><path d="M6.4 1.4L11.6 6.6L6.4 11.8L1.2 6.6Z" fill="#d0d0d0"/><path d="M2.4 2.4L12.6 12.4" stroke="#9a9a9a" stroke-width=".8"/></svg>
<svg class="i" style="left:33px;top:234px" width="14" height="13" viewBox="0 0 14 13"><path d="M6.4 1.4L11.6 6.6L6.4 11.8L1.2 6.6Z" fill="#d0d0d0"/><path d="M2.4 2.4L12.6 12.4" stroke="#9a9a9a" stroke-width=".8"/></svg>
<svg class="i" style="left:36px;top:250px" width="8" height="8" viewBox="0 0 8 8"><path d="M4 .4V7.6M.4 4H7.6M1.4 1.4L6.6 6.6M6.6 1.4L1.4 6.6" stroke="#8a8a8a" stroke-width=".7"/></svg>
<div class="sel" style="left:48.5px;top:207.3px;width:35.5px;font-size:9.3px">X-Y平面</div>
<div class="sel" style="left:48.5px;top:220.7px;width:35.5px;font-size:9.3px">X-Z平面</div>
<div class="sel" style="left:48.5px;top:234.1px;width:35.5px;font-size:9.3px">Y-Z平面</div>
<div class="sel" style="left:48.5px;top:247.5px;width:21.5px">原点</div>
<!-- rows 7-8 -->
<svg class="i" style="left:19px;top:261.6px" width="14" height="13" viewBox="0 0 14 13"><circle cx="4" cy="2.8" r="2.2" fill="#222"/><circle cx="8.8" cy="2.8" r="2.2" fill="#222"/><rect x="1" y="5" width="10.4" height="6.8" rx=".8" fill="#222"/><rect x="2.6" y="6.6" width="7" height="3.6" fill="#8a8aa0"/><path d="M11.4 7.4L13.4 6V11L11.4 9.6Z" fill="#222"/></svg>
<div class="t j" style="left:36.0px;width:29.2px;top:262.2px;color:#111">照相机</div>
<svg class="i" style="left:19px;top:275px" width="14" height="14" viewBox="0 0 14 14"><path d="M1.4 1.2L5 2.2L3.4 5Z" fill="#3a56c8"/><path d="M3.4 5L5 2.2L11.6 7.6C13 9 12.8 11.4 11 12.4C9.4 13.2 7.6 12.4 7 11Z" fill="#e4e4d0" stroke="#8a8a80" stroke-width=".6"/><path d="M5.4 5.2L10.6 10.6" stroke="#e06818" stroke-width="1.2"/></svg>
<div class="t j" style="left:36.0px;width:19.5px;top:276.2px;color:#111">光源</div>
<!-- panel bottom tabs -->
<div class="abs" style="left:2px;top:603px;width:60px;height:17.5px;background:#fdfdfd;border:1px solid #c6c6c6;border-top:none"></div>
<svg class="i" style="left:7px;top:605px" width="9" height="12" viewBox="0 0 9 12"><path d="M4.5 1L2.8 4.6H6.2ZM2.8 5L1 10.6H4ZM6.2 5L5 10.6H8Z" fill="#eef6f6" stroke="#6aa8a8" stroke-width=".7"/></svg>
<div class="t j" style="left:19.0px;width:38.8px;top:605.5px;color:#222">设计环境</div>
<svg class="i" style="left:68px;top:605px" width="9" height="12" viewBox="0 0 9 12"><rect x=".8" y=".8" width="7.2" height="10.4" rx=".8" fill="#fff" stroke="#666" stroke-width=".8"/><rect x="1.8" y="1.6" width="4" height="3.4" fill="#2f62c8"/><path d="M2 7H7M2 9H7" stroke="#999" stroke-width=".7"/></svg>
<div class="t j" style="left:80.0px;width:19.5px;top:605.5px;color:#222">属性</div>
<svg class="i" style="left:107px;top:605px" width="12" height="12" viewBox="0 0 12 12"><circle cx="4.6" cy="4.6" r="3.6" fill="#eafafa" stroke="#7a9a9a" stroke-width=".9"/><path d="M7.4 7.4L11 11" stroke="#555" stroke-width="1.5"/></svg>
<div class="t j" style="left:121.5px;width:19.5px;top:605.5px;color:#222">搜索</div>
<!-- status bar -->
<div id="vb" class="abs"></div>
<div id="status" class="abs"></div>
<div class="t l" style="left:4.2px;top:625px;color:#2a6fd6;text-decoration:underline;font-size:9.15px">www.caxa.com</div>
<div class="t j" style="left:449.0px;width:86.8px;top:625.5px;color:#333;font-size:9.6px">视图尺寸: <span style="font-size:8.3px;letter-spacing:0">1370 x&nbsp; 637</span></div>
<svg class="i" style="left:549px;top:624px" width="11" height="13" viewBox="0 0 11 13"><rect x="4.6" y=".6" width="4.6" height="11.6" fill="#f0a828" stroke="#b87818" stroke-width=".6"/><path d="M4.6 3H6.6M4.6 5.4H7.4M4.6 7.8H6.6M4.6 10.2H7.4" stroke="#7a4a08" stroke-width=".6"/><rect x=".8" y="3.2" width="2.6" height="2.6" fill="#f0c040" stroke="#b87818" stroke-width=".5"/></svg>
<div class="t j" style="left:562.0px;width:21.8px;top:625.5px;color:#333;font-size:9.6px">单位:</div>
<div class="t l" style="left:594px;top:625.5px;color:#333;font-size:9.1px">mm, deg</div>
<svg class="i" style="left:640px;top:624px" width="13" height="13" viewBox="0 0 13 13"><circle cx="5" cy="5" r="3.6" fill="#e8f4f4" stroke="#777" stroke-width="1"/><path d="M7.8 7.8L11.6 11.6" stroke="#555" stroke-width="1.6"/></svg>
<svg class="i" style="left:657px;top:624px" width="13" height="13" viewBox="0 0 13 13"><circle cx="5" cy="5" r="3.6" fill="#e8f4f4" stroke="#777" stroke-width="1"/><path d="M7.8 7.8L11.6 11.6" stroke="#555" stroke-width="1.6"/><path d="M3 3.4H7V6.6H3Z" fill="none" stroke="#999" stroke-width=".5"/></svg>
<svg class="i" style="left:684px;top:624px" width="12" height="13" viewBox="0 0 12 13"><path d="M1 2.6Q3.4 1.2 5.8 2.6V10.4Q3.4 11.8 1 10.4Z" fill="#a8d0f4" stroke="#4a8ad4" stroke-width=".7"/><path d="M5.6 3.4Q8.2 1.6 11.2 3V11Q8.4 12.6 5.6 11Z" fill="#6aa8ea" stroke="#3a78c8" stroke-width=".7"/><path d="M5.8 3.2Q8.4 1.8 11 3Q8.4 4.4 5.8 3.2Z" fill="#f4f9fe"/></svg>
<svg class="i" style="left:710px;top:624px" width="12" height="13" viewBox="0 0 12 13"><path d="M.8 11.4L3.4 8.6H11.4L8.8 11.4Z" fill="#d0d0d8" stroke="#666" stroke-width=".6"/><path d="M6 9.6V3" stroke="#1e50c8" stroke-width="1.3"/><path d="M6 .6L8.2 4H3.8Z" fill="#1e50c8"/></svg>
<svg class="i" style="left:728px;top:624px" width="13" height="13" viewBox="0 0 13 13"><path d="M1 4L3.4 2H9.6V9L7.4 11.4H1Z" fill="#f2cc20" stroke="#8a6a10" stroke-width=".7"/><path d="M1 4H7.4V11.4M7.4 4L9.6 2" fill="none" stroke="#8a6a10" stroke-width=".7"/><path d="M9.6 5.2L12.4 6.4L9.6 7.6Z" fill="#d02020"/></svg>
<svg class="i" style="left:754px;top:623.5px" width="13" height="14" viewBox="0 0 13 14"><path d="M.8 4L3.6 1.2H12V10L9.2 13H.8Z" fill="#4a90e0" stroke="#2a5a9a" stroke-width=".7"/><path d="M.8 4H9.2V13" fill="none" stroke="#dfeaf8" stroke-width=".7"/><path d="M.8 4L3.6 1.2H12L9.2 4Z" fill="#f4f8fc" stroke="#2a5a9a" stroke-width=".6"/><path d="M9.2 4L12 1.2V10L9.2 13Z" fill="#7ab0ea" stroke="#2a5a9a" stroke-width=".6"/></svg>
<svg class="i" style="left:781px;top:624px" width="13" height="13" viewBox="0 0 13 13"><circle cx="5" cy="2.4" r="1.3" fill="#2a70d0"/><path d="M.8 5.6H5M5 3.6V7.6" stroke="#2a70d0" stroke-width="1" stroke-dasharray="1.4 .8"/><rect x="5.6" y="7" width="5.6" height="5" fill="#fff" stroke="#222" stroke-width="1"/><path d="M5 7L8.4 5.4L11.8 7" fill="none" stroke="#222" stroke-width=".8"/></svg>
<svg class="i" style="left:806px;top:624px" width="14" height="13" viewBox="0 0 14 13"><path d="M1.2 6.2L6 2H12.8L8 6.2Z" fill="#c4d8f0" stroke="#5a7eb4" stroke-width=".6"/><path d="M1.2 6.2H8V11.6H1.2Z" fill="#86aee0" stroke="#5a7eb4" stroke-width=".6"/><path d="M8 6.2L12.8 2V7.4L8 11.6Z" fill="#9abce6" stroke="#5a7eb4" stroke-width=".6"/></svg>
<svg class="i" style="left:824px;top:624px" width="14" height="13" viewBox="0 0 14 13"><circle cx="3.8" cy="8.4" r="2.5" fill="#f4fafa" stroke="#8aa8a8" stroke-width=".8"/><circle cx="10" cy="8.4" r="2.5" fill="#f4fafa" stroke="#8aa8a8" stroke-width=".8"/><path d="M6.3 8H7.5M1.8 7L4.2 2L5.4 2.6M12 7L11.6 2.8L12.8 2.4" fill="none" stroke="#8aa8a8" stroke-width=".8"/></svg>
<svg class="i" style="left:848px;top:623.5px" width="13" height="14" viewBox="0 0 13 14"><path d="M.8 4L3.6 1.2H12V10L9.2 13H.8Z" fill="#3a84dc" stroke="#1e4a8a" stroke-width=".7"/><path d="M.8 4L3.6 1.2H12L9.2 4Z" fill="#7ab4f0" stroke="#1e4a8a" stroke-width=".6"/><path d="M9.2 4L12 1.2V10L9.2 13Z" fill="#2a68b8" stroke="#1e4a8a" stroke-width=".6"/></svg>
<svg class="i" style="left:873px;top:624px" width="13" height="13" viewBox="0 0 13 13"><path d="M4.4 1L1 4.2L4.4 7.4V5.4H7.4V9.4H9.4V3H4.4Z" fill="#b8b8b8"/><path d="M8.6 7.6V12.2L10 11L11 12.8" fill="none" stroke="#c8c8c8" stroke-width=".8"/></svg>

<div class="abs" style="left:888px;top:623.6px;width:19px;height:15px;background:#c8c9cc;border:1px solid #7aa6e0"></div>
<svg class="i" style="left:892px;top:625.5px" width="11" height="12" viewBox="0 0 11 12"><path d="M2 .8V9.4L4.2 7.4L5.8 11L7.2 10.4L5.6 6.8H8.6Z" fill="#fff" stroke="#333" stroke-width=".8" stroke-linejoin="round"/></svg>
<svg class="i" style="left:909px;top:624px" width="13" height="13" viewBox="0 0 13 13"><rect x=".6" y="1.4" width="6" height="5" fill="#fff" stroke="#bbb" stroke-width=".6"/><path d="M6.4 3.6V11L8.2 9.4L9.4 12.2L10.6 11.6L9.4 9H11.6Z" fill="#fff" stroke="#333" stroke-width=".8" stroke-linejoin="round"/></svg>
<div class="combo" style="left:924px;width:106px"></div>
<div class="t j" style="left:926.5px;width:19.5px;top:625.5px;color:#111;font-size:9.6px">任意</div>
<svg class="i" style="left:1022px;top:630px" width="5" height="4" viewBox="0 0 5 4"><path d="M.4 .6H4.6L2.5 3Z" fill="#666"/></svg>
<div class="combo" style="left:1031px;width:134px"></div>
<div class="t l" style="left:1033px;top:625.5px;color:#111;font-size:9.4px">Default</div>
<svg class="i" style="left:1157.5px;top:630px" width="5" height="4" viewBox="0 0 5 4"><path d="M.4 .6H4.6L2.5 3Z" fill="#666"/></svg>
<svg class="i" style="left:1168px;top:624px" width="13" height="13" viewBox="0 0 13 13"><rect x="4.6" y="1.4" width="3.8" height="3" fill="#e01828" stroke="#5a6ac0" stroke-width=".5"/><rect x=".8" y="8" width="4" height="3.6" fill="#9abce8" stroke="#4a6ac8" stroke-width=".6"/><rect x="7.8" y="8" width="4" height="3.6" fill="#f4e468" stroke="#4a6ac8" stroke-width=".6"/><path d="M6.5 4.6V6.4M2.8 8V6.4H9.8V8" fill="none" stroke="#555" stroke-width=".7"/></svg>
<svg class="i" style="left:1188px;top:628px" width="9" height="9" viewBox="0 0 9 9"><g fill="#b0b0b0"><rect x="6.4" y="1" width="1.4" height="1.4"/><rect x="6.4" y="3.8" width="1.4" height="1.4"/><rect x="3.6" y="3.8" width="1.4" height="1.4"/><rect x="6.4" y="6.6" width="1.4" height="1.4"/><rect x="3.6" y="6.6" width="1.4" height="1.4"/><rect x=".8" y="6.6" width="1.4" height="1.4"/></g></svg>
<svg class="i" style="left:673.1px;top:629.4px" width="7" height="5" viewBox="0 0 7 5"><path d="M1.3 1L3.5 3.1L5.7 1" fill="none" stroke="#3c3c3c" stroke-width="1.25"/></svg>
<svg class="i" style="left:699.7px;top:629.4px" width="7" height="5" viewBox="0 0 7 5"><path d="M1.3 1L3.5 3.1L5.7 1" fill="none" stroke="#3c3c3c" stroke-width="1.25"/></svg>
<svg class="i" style="left:744.1px;top:629.4px" width="7" height="5" viewBox="0 0 7 5"><path d="M1.3 1L3.5 3.1L5.7 1" fill="none" stroke="#3c3c3c" stroke-width="1.25"/></svg>
<svg class="i" style="left:770.1px;top:629.4px" width="7" height="5" viewBox="0 0 7 5"><path d="M1.3 1L3.5 3.1L5.7 1" fill="none" stroke="#3c3c3c" stroke-width="1.25"/></svg>
<svg class="i" style="left:796.3px;top:629.4px" width="7" height="5" viewBox="0 0 7 5"><path d="M1.3 1L3.5 3.1L5.7 1" fill="none" stroke="#3c3c3c" stroke-width="1.25"/></svg>
<svg class="i" style="left:837.9px;top:629.4px" width="7" height="5" viewBox="0 0 7 5"><path d="M1.3 1L3.5 3.1L5.7 1" fill="none" stroke="#3c3c3c" stroke-width="1.25"/></svg>
<svg class="i" style="left:862.8px;top:629.4px" width="7" height="5" viewBox="0 0 7 5"><path d="M1.3 1L3.5 3.1L5.7 1" fill="none" stroke="#3c3c3c" stroke-width="1.25"/></svg>
<div id="rb" class="abs"></div><div id="lb" class="abs"></div><div id="tb" class="abs"></div>
</body></html>
